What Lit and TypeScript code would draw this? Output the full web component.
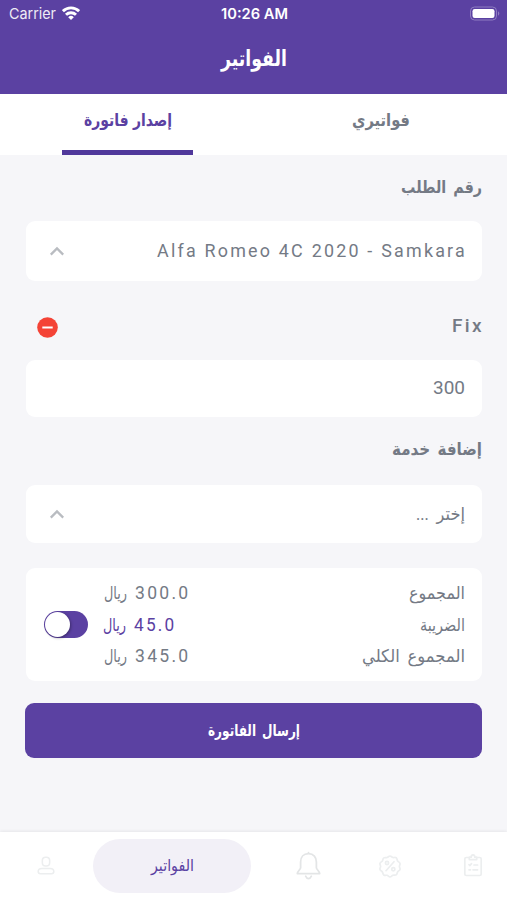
import { LitElement, html, css, svg } from "lit";
import { customElement, state } from "lit/decorators.js";

/** One line of text set to a fixed measure; the baseline sits 18px below the box top. */
const line = (text: string, width: number, cls: string) => html`
  <svg class="line ${cls}" width=${width} height="24">
    <text x=${width / 2} y="18" text-anchor="middle" textLength=${width} lengthAdjust="spacingAndGlyphs">${text}</text>
  </svg>`;

const chevron = html`
  <svg class="chevron" width="16" height="12" viewBox="0 0 16 12">
    <path d="M1.8 9.6 8 3.4l6.2 6.2" />
  </svg>`;

const navIcons = {
  user: svg`<rect x="8" y="2.500" width="8" height="9.500" rx="3.600"/><path d="M7.400 14.800h9.200c2.300 0 3.900 1.300 3.900 3.300 0 1.500-.9 2.300-2.400 2.300H5.900c-1.500 0-2.400-.8-2.400-2.300 0-2 1.600-3.300 3.900-3.300z"/>`,
  bell: svg`<path d="M12 1.600v-1M12 1.600c-5 0-7.600 3.500-7.600 8v5.600c0 1.500-3.200 3.600-3.200 5.600h21.600c0-2-3.200-4.100-3.200-5.600V9.600c0-4.500-2.600-8-7.600-8zM9.300 23.400c.6 1.500 1.500 2.200 2.700 2.200s2.100-.7 2.700-2.200"/>`,
  offer: svg`<path d="M12 2c1.300 0 1.700 1.200 2.900 1.500s2.200-.5 3.300.3.700 2.100 1.400 3.100 2 1.200 2.400 2.500-.6 1.800-.6 3 1 1.900.6 3.100-1.700 1.400-2.400 2.400-.3 2.300-1.400 3-2.100 0-3.300.4-1.600 1.500-2.900 1.500-1.700-1.200-2.900-1.500-2.200.5-3.300-.3-.7-2.100-1.400-3.100-2-1.200-2.400-2.500.6-1.800.6-3-1-1.900-.6-3.100S3.700 7.900 4.400 6.900s.3-2.300 1.400-3 2.100 0 3.300-.4S10.700 2 12 2zM16 7.700l-8 9"/><circle cx="9" cy="9" r="1.600"/><circle cx="15.300" cy="15.300" r="1.600"/>`,
  orders: svg`<path d="M8 4.500H5.300c-1 0-1.500.5-1.500 1.500v15c0 1 .5 1.500 1.500 1.500h13.400c1 0 1.500-.5 1.500-1.500V6c0-1-.5-1.500-1.500-1.500H16M8.300 6.600V4.200h1.900c0-3.200 3.600-3.200 3.600 0h1.900v2.400z"/><path d="M8 11.600l1 .9 1.500-1.900M13 12h3.600M8 16.800h1.500M12 16.800h4.600"/>`,
};

@customElement("app-root")
export class AppRoot extends LitElement {
  @state() private taxOn = true;

  static styles = css`
    :host {
      display: flex;
      flex-direction: column;
      width: 100%;
      height: 900px;
      box-sizing: border-box;
      background: #f6f6f9;
      color: #747a85;
      font-family: Roboto, "DejaVu Sans", sans-serif;
      overflow: hidden;
    }
    svg { display: block; flex: none; }
    .line { overflow: visible; fill: currentColor; font-size: 17.500px; direction: rtl; word-spacing: 4px; }
    .latin { direction: ltr; word-spacing: 0; }
    .status { font: 400 15px Inter, sans-serif; direction: ltr; word-spacing: 0; }
    .clock { font-weight: 600; font-size: 14.500px; }
    .title { font-size: 22px; font-weight: 700; }
    .bold { font-weight: 700; font-size: 17px; }
    .car { font-size: 18.500px; letter-spacing: 2.300px; }
    .name { font-size: 18.500px; font-weight: 500; letter-spacing: 2.300px; }
    .price { font-size: 19px; }
    .amount { font-size: 18.500px; letter-spacing: 2.400px; }
    .tab-label { font-size: 17px; font-weight: 700; word-spacing: 1px; }
    .small { font-size: 16px; font-weight: 700; }
    .nav-label { font-size: 16px; }

    header { height: 94px; flex: none; background: #5b41a2; color: #fff; }
    .statusbar {
      display: grid;
      grid-template-columns: 1fr auto 1fr;
      height: 25px;
      padding: 1px 7px 0 9px;
      box-sizing: border-box;
      direction: ltr;
    }
    .carrier { display: flex; gap: 6px; }
    .carrier .status { opacity: 0.9; }
    .wifi { margin-top: 4.500px; fill: none; stroke: #fff; stroke-width: 2.900; }
    .battery { justify-self: end; margin-top: 5px; }
    .heading { display: flex; justify-content: center; padding-top: 23px; }

    .tabs { display: flex; height: 61px; padding-left: 1px; flex: none; background: #fff; }
    .tab { flex: 1; display: flex; flex-direction: column; align-items: center; padding-top: 14px; }
    .tab.active { color: #5b41a2; }
    .bar { width: 131px; height: 5px; background: #50389b; margin-top: auto; }

    main { flex: 1; padding: 0 25px 0 26px; direction: rtl; }
    .label { display: flex; justify-content: space-between; align-items: flex-start; }
    .label.order { height: 66px; padding-top: 20px; box-sizing: border-box; }
    .label.service { height: 79px; padding-top: 33px; box-sizing: border-box; }
    .label.service .name { margin-right: -2px; }
    .label.add { height: 68px; padding-top: 20.500px; box-sizing: border-box; }
    .card {
      display: flex;
      justify-content: space-between;
      background: #fff;
      border-radius: 9px;
      padding: 0 17px 0 23px;
      box-sizing: border-box;
    }
    .card.car-card { height: 60px; padding-top: 18px; }
    .car-card .car { margin-right: -2px; }
    .card.price-card { height: 56.500px; padding-top: 15.500px; }
    .card.pick-card { height: 58.500px; padding-top: 17px; }
    .chevron { margin-top: 6px; fill: none; stroke: #b9bcc1; stroke-width: 2.300; }
    .remove { margin: 2.500px 0 0 11px; }

    .totals { display: block; margin-top: 25px; height: 113px; padding: 13px 17px 0 18px; }
    .row { display: grid; grid-template-columns: 1fr 86px 60px; height: 31.700px; }
    .sum { display: flex; gap: 8px; justify-content: flex-end; }
    .row.tax .sum { color: #5b41a2; position: relative; left: -1px; }
    .toggle {
      all: unset;
      justify-self: end;
      display: flex;
      direction: ltr;
      width: 44px;
      height: 27px;
      margin-top: -1.500px;
      box-sizing: border-box;
      padding: 1px;
      border-radius: 14px;
      background: #5b41a2;
    }
    .knob { width: 25px; height: 25px; border-radius: 50%; background: #fff; box-shadow: 1px 1px 3px #0005; }
    .send {
      all: unset;
      display: flex;
      justify-content: center;
      box-sizing: border-box;
      width: calc(100% + 1px);
      height: 55px;
      margin-top: 22px;
      padding-top: 14.500px;
      border-radius: 9px;
      background: #5b41a2;
      color: #fff;
    }

    nav {
      flex: none;
      display: grid;
      grid-template-columns: 93px 158px 114px 50px 92px;
      height: 68px;
      background: #fff;
      box-shadow: 0 -1px 3px #00000010;
      justify-items: center;
    }
    .pill {
      display: flex;
      justify-content: center;
      width: 158px;
      height: 54px;
      margin-top: 7px;
      padding-top: 13.500px;
      box-sizing: border-box;
      border-radius: 27px;
      background: #f2f0f7;
      color: #5b41a2;
    }
    .icon { fill: none; stroke: #eceeef; stroke-width: 1.700; stroke-linejoin: round; stroke-linecap: round; overflow: visible; }
    .user { margin-top: 22.500px; margin-right: 1px; }
    .bell { margin-top: 20px; stroke: #e3e5e6; }
    .offer { margin-top: 21.500px; }
    .orders { margin: 21px 0 0 23px; }
  `;

  private sum(label: string, labelWidth: number, value: string, valueWidth: number) {
    return html`
      ${line(label, labelWidth, "")}
      <div class="sum">
        ${line(value, valueWidth, "latin amount")} ${line("ريال", 23, "")}
      </div>`;
  }

  render() {
    return html`
      <header>
        <div class="statusbar">
          <div class="carrier">
            ${line("Carrier", 47, "status")}
            <svg class="wifi" width="18" height="14" viewBox="0 0 18 14">
              <path d="M.9 5.200a11.500 11.500 0 0 1 16.200 0M4 8.800a7.200 7.200 0 0 1 10 0" />
              <path d="M9 14 6.200 11.200a4 4 0 0 1 5.600 0z" fill="#fff" stroke="none" />
            </svg>
          </div>
          ${line("10:26 AM", 67, "status clock")}
          <svg class="battery" width="31" height="15" viewBox="0 0 31 15">
            <rect x="1.500" y="1" width="26" height="13" rx="4" fill="none" stroke="#8f7dc1" />
            <rect x="3.500" y="3" width="22" height="9" rx="2.200" fill="#fff" />
            <path d="M29 5.300v4.400c1.800-.9 1.800-3.500 0-4.400z" fill="#8f7dc1" />
          </svg>
        </div>
        <div class="heading">${line("الفواتير", 66, "title")}</div>
      </header>
      <div class="tabs">
        <div class="tab active">
          ${line("إصدار فاتورة", 88, "tab-label")}
          <div class="bar"></div>
        </div>
        <div class="tab">${line("فواتيري", 58, "tab-label")}</div>
      </div>
      <main>
        <div class="label order">${line("رقم الطلب", 81, "bold")}</div>
        <div class="card car-card">
          ${line("Alfa Romeo 4C 2020 - Samkara", 310, "latin car")} ${chevron}
        </div>
        <div class="label service">
          ${line("Fix", 32, "latin name")}
          <svg class="remove" width="21" height="21" viewBox="0 0 21 21">
            <circle cx="10.500" cy="10.500" r="10.300" fill="#f44336" />
            <path d="M5.300 10.500h10.400" stroke="#fff" stroke-width="2" />
          </svg>
        </div>
        <div class="card price-card">${line("300", 32, "latin price")}</div>
        <div class="label add">${line("إضافة خدمة", 90, "bold")}</div>
        <div class="card pick-card">${line("إختر ...", 49, "")} ${chevron}</div>
        <section class="card totals">
          <div class="row">${this.sum("المجموع", 56, "300.0", 55.5)}</div>
          <div class="row tax">
            ${this.sum("الضريبة", 45, "45.0", 42.5)}
            <button class="toggle" @click=${() => (this.taxOn = !this.taxOn)} aria-pressed=${this.taxOn}>
              <span class="knob"></span>
            </button>
          </div>
          <div class="row">${this.sum("المجموع الكلي", 103, "345.0", 55.5)}</div>
        </section>
        <button class="send">${line("إرسال الفاتورة", 92, "small")}</button>
      </main>
      <nav>
        <svg class="icon user" width="22" height="22" viewBox="0 0 24 24">${navIcons.user}</svg>
        <div class="pill">${line("الفواتير", 43, "nav-label")}</div>
        <svg class="icon bell" width="25" height="28" viewBox="0 0 24 27">${navIcons.bell}</svg>
        <svg class="icon offer" width="24" height="24" viewBox="0 0 24 24">${navIcons.offer}</svg>
        <svg class="icon orders" width="24" height="24" viewBox="0 0 24 24">${navIcons.orders}</svg>
      </nav>
    `;
  }
}
